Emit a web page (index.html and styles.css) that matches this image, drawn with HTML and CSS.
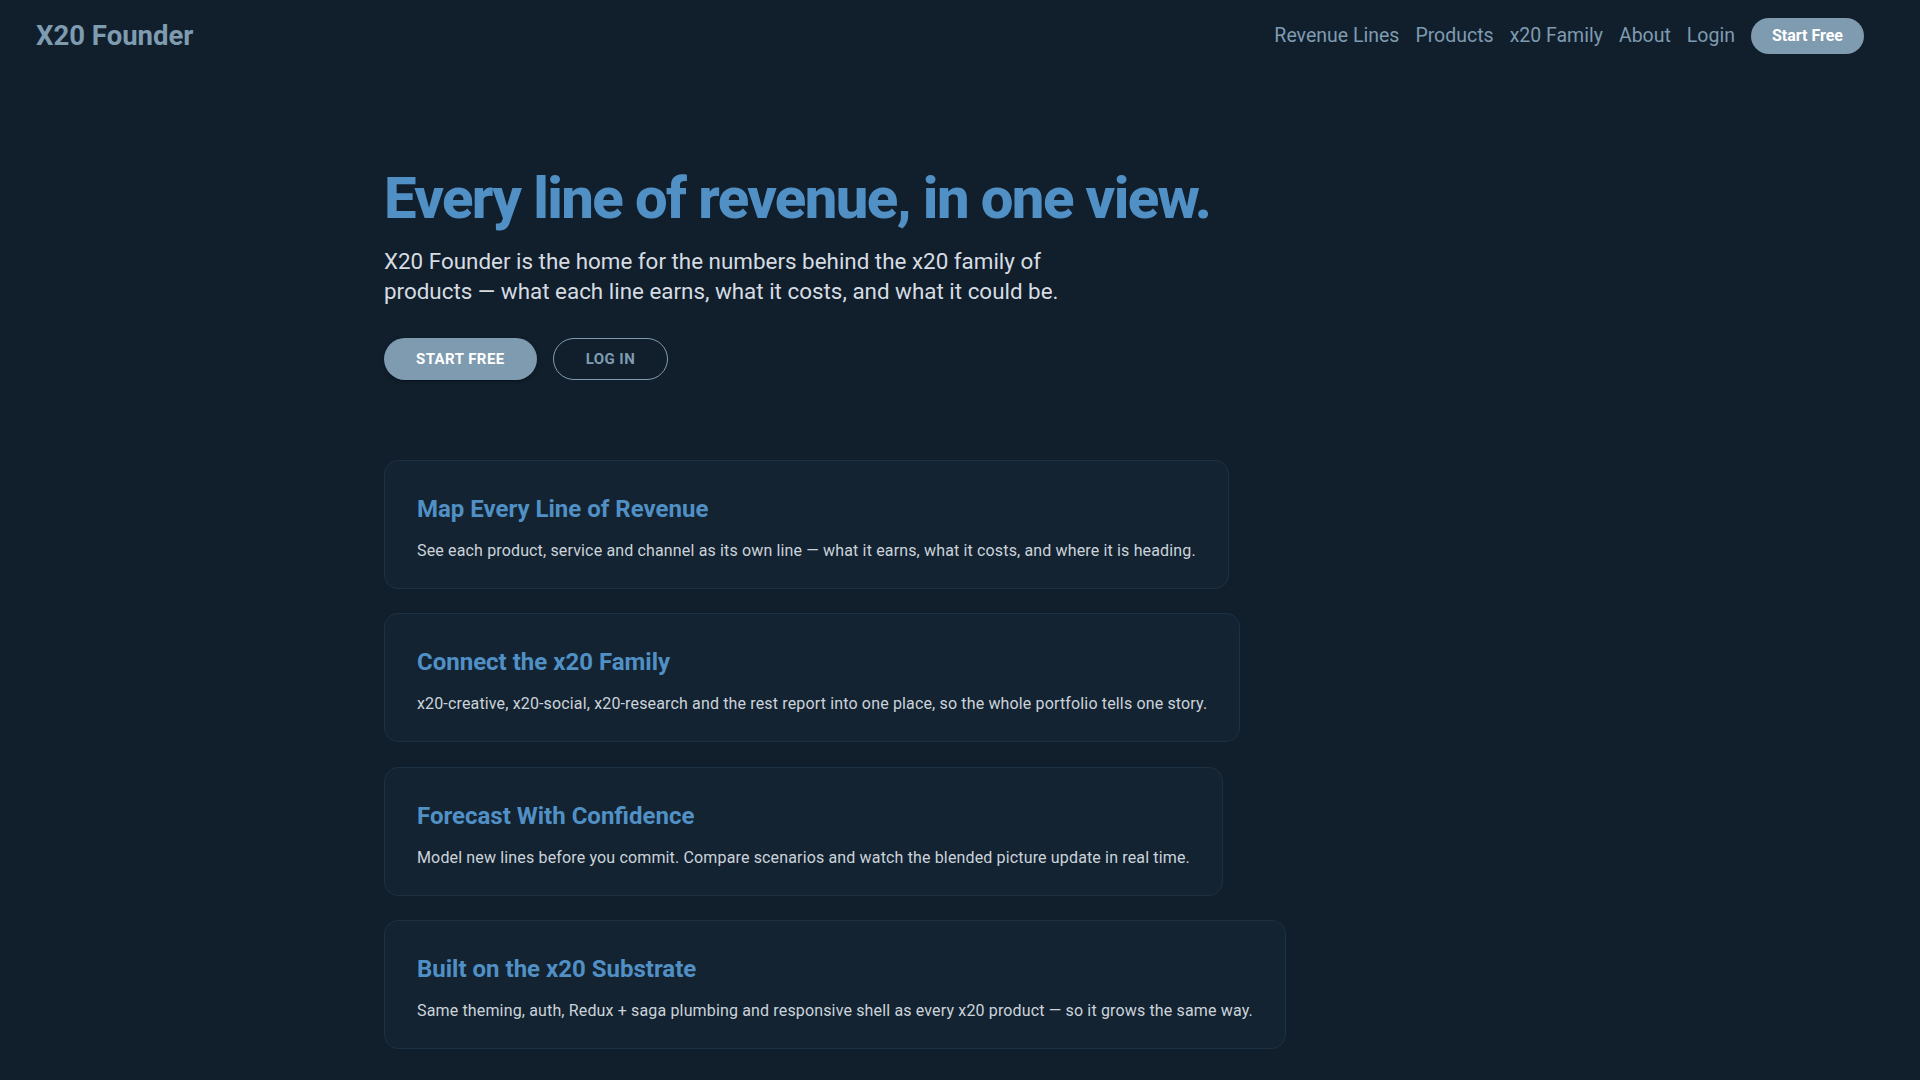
FILE: index.html
```html
<!DOCTYPE html>
<html lang="en">
<head>
<meta charset="utf-8">
<title>X20 Founder</title>
<link rel="stylesheet" href="styles.css">
</head>
<body>
<header class="nav">
  <a class="brand" href="#">X20 Founder</a>
  <nav class="nav-links">
    <a class="nav-link" href="#">Revenue Lines</a>
    <a class="nav-link" href="#">Products</a>
    <a class="nav-link" href="#">x20 Family</a>
    <a class="nav-link" href="#">About</a>
    <a class="nav-link" href="#">Login</a>
    <a class="nav-cta" href="#">Start Free</a>
  </nav>
</header>
<main class="container">
  <section class="hero">
    <h1 class="hero-title">Every line of revenue, in one view.</h1>
    <p class="hero-sub">X20 Founder is the home for the numbers behind the x20 family of products — what each line earns, what it costs, and what it could be.</p>
    <div class="hero-actions">
      <a class="btn btn-primary" href="#">Start Free</a>
      <a class="btn btn-outline" href="#">Log In</a>
    </div>
  </section>
  <section class="features">
    <article class="card">
      <h3 class="card-title">Map Every Line of Revenue</h3>
      <p class="card-text">See each product, service and channel as its own line — what it earns, what it costs, and where it is heading.</p>
    </article>
    <article class="card">
      <h3 class="card-title">Connect the x20 Family</h3>
      <p class="card-text">x20-creative, x20-social, x20-research and the rest report into one place, so the whole portfolio tells one story.</p>
    </article>
    <article class="card">
      <h3 class="card-title">Forecast With Confidence</h3>
      <p class="card-text">Model new lines before you commit. Compare scenarios and watch the blended picture update in real time.</p>
    </article>
    <article class="card">
      <h3 class="card-title">Built on the x20 Substrate</h3>
      <p class="card-text">Same theming, auth, Redux + saga plumbing and responsive shell as every x20 product — so it grows the same way.</p>
    </article>
  </section>
</main>
</body>
</html>
```

FILE: styles.css
```css
* { box-sizing: border-box; }

html, body {
  margin: 0;
  padding: 0;
}

body {
  background: #111f2d;
  font-family: Roboto, "Liberation Sans", Arial, sans-serif;
  color: #d6dce2;
  min-height: 100vh;
}

a { text-decoration: none; }

.nav {
  height: 72px;
  display: flex;
  align-items: center;
  justify-content: space-between;
  padding: 0 56px 0 36px;
}

.brand {
  font-size: 27.5px;
  font-weight: 700;
  color: #7f9bb0;
  line-height: 1;
}

.nav-links {
  display: flex;
  align-items: center;
  gap: 16px;
}

.nav-link {
  font-size: 19.5px;
  color: #7f9bb0;
  line-height: 24px;
}

.nav-cta {
  display: inline-block;
  background: #7f9bb0;
  color: #ffffff;
  font-size: 16px;
  font-weight: 700;
  line-height: 24px;
  padding: 6px 21px;
  border-radius: 999px;
}

.container {
  max-width: 1200px;
  margin: 0 auto;
  padding: 0 24px 40px;
}

.hero {
  padding-top: 92px;
}

.hero-title {
  margin: 0;
  font-size: 58px;
  line-height: 1.2;
  font-weight: 800;
  letter-spacing: -1.6px;
  color: #5190c5;
}

.hero-sub {
  margin: 12px 0 0;
  max-width: 720px;
  font-size: 22.4px;
  line-height: 30px;
  color: #d6dce2;
}

.hero-actions {
  display: flex;
  gap: 16px;
  margin-top: 32px;
}

.btn {
  display: inline-block;
  font-size: 15px;
  font-weight: 700;
  line-height: 26px;
  letter-spacing: 0.43px;
  text-transform: uppercase;
  border-radius: 999px;
}

.btn-primary {
  background: #7f9bb0;
  color: #ffffff;
  padding: 8px 32px;
  box-shadow: 0 3px 1px -2px rgba(0,0,0,0.2), 0 2px 2px 0 rgba(0,0,0,0.14), 0 1px 5px 0 rgba(0,0,0,0.12);
}

.btn-outline {
  color: #7f9bb0;
  border: 1px solid #7f9bb0;
  padding: 7px 32px;
}

.features {
  margin-top: 80px;
  display: flex;
  flex-direction: column;
  align-items: flex-start;
  gap: 24.5px;
}

.card {
  background: #132332;
  border: 1px solid #1d3144;
  border-radius: 14px;
  padding: 32px 32px 25px;
}

.card-title {
  margin: 0 0 14px;
  font-size: 24px;
  line-height: 32px;
  font-weight: 700;
  color: #5190c5;
}

.card-text {
  margin: 0;
  font-size: 16px;
  line-height: 24px;
  letter-spacing: 0.15px;
  color: #ccd3da;
}
```
